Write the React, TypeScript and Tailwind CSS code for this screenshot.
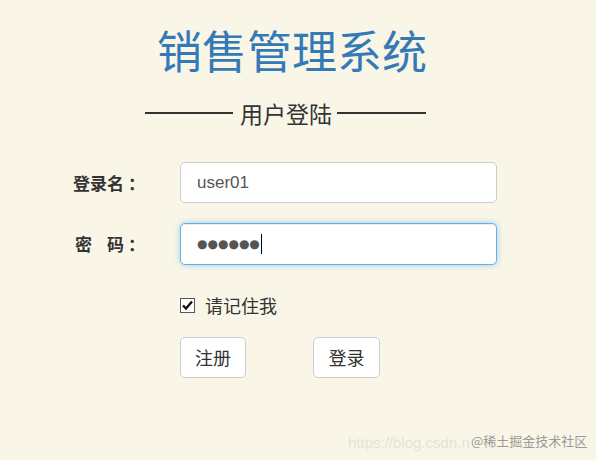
import React from "react";

const cjk = { fontFamily: '"Noto Sans CJK SC", "Noto Sans", sans-serif' };
const latin = { fontFamily: '"Liberation Sans", "Noto Sans CJK SC", sans-serif' };

export default function App() {
  return (
    <div className="relative w-[596px] h-[460px] overflow-hidden bg-[#f9f6e8] text-[#333]" style={cjk}>
      <div className="pt-[22px] flex justify-center pr-[12px]">
        <h1 className="text-[45px] leading-[56px] text-[#337ab7] font-normal">销售管理系统</h1>
      </div>
      <div className="mt-[20px] flex items-center pl-[145px] h-[30px]">
        <div className="w-[88px] h-[2px] bg-[#333]" />
        <div className="ml-[7px] text-[23px] leading-[30px]">用户登陆</div>
        <div className="ml-[5px] w-[89px] h-[2px] bg-[#333]" />
      </div>

      <div className="mt-[34px] flex items-center h-[41px]">
        <div className="w-[145px] text-right text-[17px] font-bold">
          登录名<span className="ml-[4px]">：</span>
        </div>
        <div
          className="ml-[35px] w-[317px] h-[41px] rounded-[5px] border border-[#ccc] bg-white flex items-center pl-[16px] text-[17px] text-[#555]"
          style={latin}
        >
          user01
        </div>
      </div>

      <div className="mt-[20px] flex items-center h-[42px]">
        <div className="w-[145px] text-right text-[17px] font-bold">
          密<span className="inline-block w-[15px]" />码<span className="ml-[4px]">：</span>
        </div>
        <div className="ml-[35px] w-[317px] h-[42px] rounded-[5px] border border-[#66afe9] bg-white flex items-center pl-[16px] shadow-[inset_0_1px_1px_rgba(0,0,0,0.075),0_0_6px_rgba(102,175,233,0.6)]">
          <span className="text-[12px] text-[#555]" style={{ fontFamily: '"DejaVu Sans", sans-serif' }}>
            ●●●●●●
          </span>
          <span className="ml-[1px] w-[1px] h-[20px] bg-black" />
        </div>
      </div>

      <div className="mt-[28px] flex items-center h-[24px] pl-[180px]">
        <div className="w-[15px] h-[15px] border border-[#555] bg-white flex items-center justify-center">
          <svg width="13" height="13" viewBox="0 0 13 13">
            <path d="M2 6.5 L5 9.5 L11 2.5" fill="none" stroke="#111" strokeWidth="2.4" />
          </svg>
        </div>
        <span className="ml-[10px] text-[18px]">请记住我</span>
      </div>

      <div className="mt-[20px] flex pl-[180px] gap-[67px]">
        <button className="w-[66px] h-[41px] rounded-[5px] border border-[#ccc] bg-white text-[18px] text-[#333]">注册</button>
        <button className="w-[67px] h-[41px] rounded-[5px] border border-[#ccc] bg-white text-[18px] text-[#333]">登录</button>
      </div>

      <div className="absolute left-[348px] top-[432px] text-[15px] text-[#e6e3d6]" style={latin}>
        https://blog.csdn.n
      </div>
      <div className="absolute left-[471px] top-[431px] text-[13px] text-[#999]">@稀土掘金技术社区</div>
    </div>
  );
}
